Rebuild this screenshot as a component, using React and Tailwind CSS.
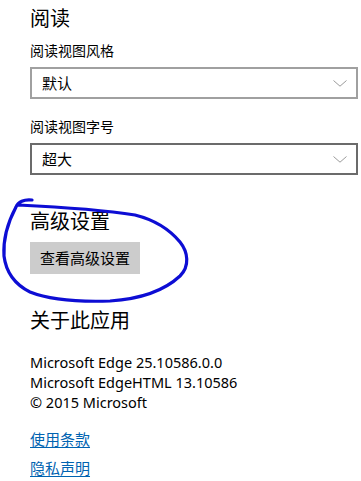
import React from 'react';

const Chevron = () => (
  <svg width="14" height="7" viewBox="0 0 14 7" className="mr-[1px] shrink-0">
    <polyline points="0.5,0.5 7,6.2 13.5,0.5" fill="none" stroke="#9a9a9a" strokeWidth="1" />
  </svg>
);

const Select = ({ value, dark }) => (
  <div
    className={`mt-[6px] flex h-[32px] w-[328px] items-center justify-between border-2 bg-white pl-[10px] pr-[8px] text-[15px] leading-5 text-black ${
      dark ? 'border-[#6b6b6b]' : 'border-[#a0a0a0]'
    }`}
  >
    <span>{value}</span>
    <Chevron />
  </div>
);

const App = () => {
  return (
    <div
      className="relative min-h-[481px] w-[361px] overflow-hidden bg-white pl-[30px] pt-[5px] text-black"
      style={{ fontFamily: '"Segoe UI", "Noto Sans", "Noto Sans CJK SC", sans-serif' }}
    >
      <h2 className="text-[20px] leading-7">阅读</h2>
      <p className="mt-[8px] text-[14px] leading-5">阅读视图风格</p>
      <Select value="默认" />
      <p className="mt-[18px] text-[14px] leading-5">阅读视图字号</p>
      <Select value="超大" dark />

      <h2 className="mt-[33px] text-[20px] leading-7">高级设置</h2>
      <button className="mt-[6px] flex h-[32px] w-[110px] items-center justify-center bg-[#cccccc] text-[15px] leading-5">
        查看高级设置
      </button>

      <h2 className="mt-[33px] text-[20px] leading-7">关于此应用</h2>
      <div className="mt-[17px] text-[14.5px] leading-5">
        <p>Microsoft Edge 25.10586.0.0</p>
        <p>Microsoft EdgeHTML 13.10586</p>
        <p>© 2015 Microsoft</p>
      </div>
      <a className="mt-[17px] block w-fit text-[15px] leading-5 text-[#0063b1] underline underline-offset-2">
        使用条款
      </a>
      <a className="mt-[9px] block w-fit text-[15px] leading-5 text-[#0063b1] underline underline-offset-2">
        隐私声明
      </a>

      {/* hand-drawn circle over the advanced settings block */}
      <svg className="pointer-events-none absolute left-0 top-0" width="361" height="481">
        <path
          d="M32,200 C24,199 18,202 16,207 C8,222 3,240 4,256 C6,272 14,284 30,292 C50,300 80,302 110,301 C140,299 165,290 180,276 C190,266 188,252 180,242 C170,230 155,220 135,215 C110,211 60,207 18,205"
          fill="none"
          stroke="#0d0dd4"
          strokeWidth="3.2"
          strokeLinecap="round"
          strokeLinejoin="round"
        />
      </svg>
    </div>
  );
};

export default App;
